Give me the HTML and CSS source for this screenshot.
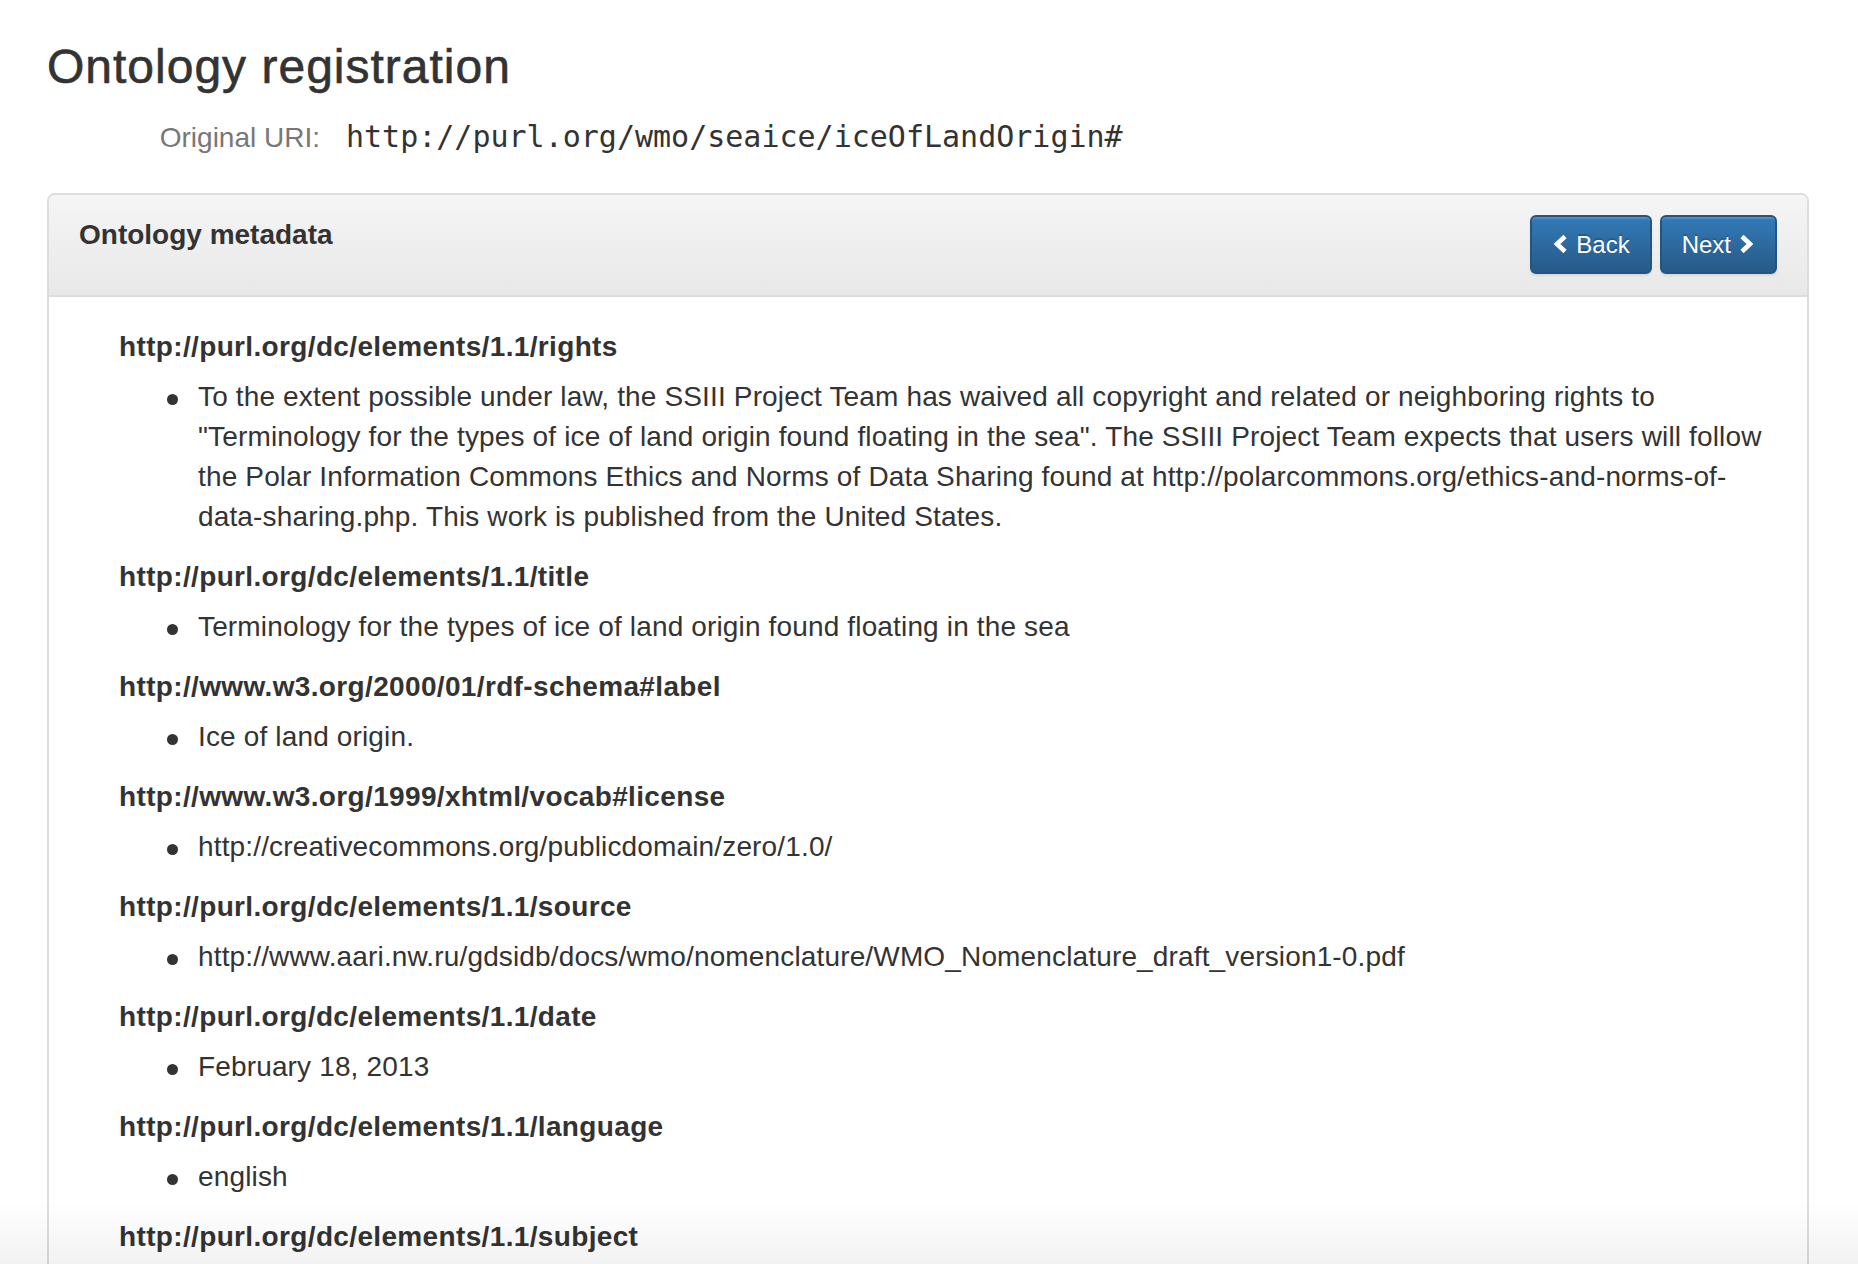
FILE: index.html
```html
<!DOCTYPE html>
<html lang="en">
<head>
<meta charset="utf-8">
<title>Ontology registration</title>
<link rel="stylesheet" href="styles.css">
</head>
<body>
<div class="page">
  <h3 class="page-title">Ontology registration</h3>
  <div class="uri-row">
    <span class="uri-label">Original URI:</span><span class="uri-value">http://purl.org/wmo/seaice/iceOfLandOrigin#</span>
  </div>

  <div class="panel">
    <div class="panel-heading">
      <h4 class="panel-title">Ontology metadata</h4>
      <div class="btn-group">
        <button class="btn"><svg class="chev" width="16" height="20" viewBox="0 0 16 20"><polyline points="13,2.5 5,10 13,17.5" fill="none" stroke="#fff" stroke-width="4.6" stroke-linejoin="miter"/></svg>Back</button>
        <button class="btn">Next<svg class="chev chev-right" width="16" height="20" viewBox="0 0 16 20"><polyline points="3,2.5 11,10 3,17.5" fill="none" stroke="#fff" stroke-width="4.6" stroke-linejoin="miter"/></svg></button>
      </div>
    </div>
    <div class="panel-body">
      <dl class="props">
        <dt>http://purl.org/dc/elements/1.1/rights</dt>
        <dd><ul><li>To the extent possible under law, the SSIII Project Team has waived all copyright and related or neighboring rights to "Terminology for the types of ice of land origin found floating in the sea". The SSIII Project Team expects that users will follow the Polar Information Commons Ethics and Norms of Data Sharing found at http://polarcommons.org/ethics-and-norms-of-data-sharing.php. This work is published from the United States.</li></ul></dd>

        <dt>http://purl.org/dc/elements/1.1/title</dt>
        <dd><ul><li>Terminology for the types of ice of land origin found floating in the sea</li></ul></dd>

        <dt>http://www.w3.org/2000/01/rdf-schema#label</dt>
        <dd><ul><li>Ice of land origin.</li></ul></dd>

        <dt>http://www.w3.org/1999/xhtml/vocab#license</dt>
        <dd><ul><li>http://creativecommons.org/publicdomain/zero/1.0/</li></ul></dd>

        <dt>http://purl.org/dc/elements/1.1/source</dt>
        <dd><ul><li>http://www.aari.nw.ru/gdsidb/docs/wmo/nomenclature/WMO_Nomenclature_draft_version1-0.pdf</li></ul></dd>

        <dt>http://purl.org/dc/elements/1.1/date</dt>
        <dd><ul><li>February 18, 2013</li></ul></dd>

        <dt>http://purl.org/dc/elements/1.1/language</dt>
        <dd><ul><li>english</li></ul></dd>

        <dt>http://purl.org/dc/elements/1.1/subject</dt>
      </dl>
    </div>
  </div>
</div>
<div class="bottom-fade"></div>
</body>
</html>
```

FILE: styles.css
```css
html, body {
  margin: 0;
  padding: 0;
  background: #fff;
}

body {
  font-family: "Liberation Sans", Helvetica, Arial, sans-serif;
  font-size: 28px;
  line-height: 40px;
  color: #333;
}

.page {
  padding: 41px 49px 0 47px;
}

.page-title {
  margin: 0;
  font-size: 48px;
  line-height: 1.1;
  font-weight: normal;
  letter-spacing: 1px;
  -webkit-text-stroke: 0.6px #333;
  color: #333;
}

.uri-row {
  margin-top: 23px;
  line-height: 40px;
}

.uri-label {
  display: inline-block;
  width: 273px;
  text-align: right;
  color: #777;
}

.uri-value {
  margin-left: 26px;
  font-family: "DejaVu Sans Mono", "Liberation Mono", monospace;
  font-size: 30px;
  color: #333;
}

.panel {
  margin-top: 35px;
  border: 2px solid #ddd;
  border-radius: 8px;
  background: #fff;
}

.panel-heading {
  display: flex;
  justify-content: space-between;
  align-items: flex-start;
  padding: 20px 30px 21px 30px;
  border-bottom: 2px solid #ddd;
  border-radius: 6px 6px 0 0;
  background: linear-gradient(to bottom, #f5f5f5 0%, #e8e8e8 100%);
}

.panel-title {
  margin: 0;
  font-size: 28px;
  line-height: 40px;
  font-weight: bold;
  color: #333;
}

.btn-group {
  display: flex;
  gap: 8px;
}

.btn {
  display: inline-flex;
  align-items: center;
  margin: 0;
  padding: 10px 20px;
  font-family: "Liberation Sans", Helvetica, Arial, sans-serif;
  font-size: 24px;
  line-height: 35px;
  color: #fff;
  text-shadow: 0 -2px 0 rgba(0, 0, 0, 0.2);
  border: 2px solid #245580;
  border-radius: 6px;
  background: linear-gradient(to bottom, #337ab7 0%, #265a88 100%);
  box-shadow: inset 0 2px 0 rgba(255, 255, 255, 0.15), 0 2px 2px rgba(0, 0, 0, 0.075);
  cursor: pointer;
}

.chev {
  display: block;
  flex: none;
  margin-right: 8px;
}

.chev-right {
  margin-right: 0;
  margin-left: 8px;
}

.panel-body {
  padding: 30px 30px 30px 30px;
}

.props {
  margin: 0;
  padding-left: 40px;
}

.props dt {
  font-weight: bold;
  letter-spacing: 0.35px;
  margin: 0 0 10px 0;
}

.props dd {
  margin: 0;
}

.props ul {
  margin: 0 0 20px 0;
  padding-left: 79px;
  list-style: none;
}

.props li {
  position: relative;
  letter-spacing: 0.15px;
}

.props li::before {
  content: "";
  position: absolute;
  left: -31px;
  top: 17px;
  width: 11px;
  height: 11px;
  border-radius: 50%;
  background: #333;
}

.bottom-fade {
  position: fixed;
  left: 0;
  right: 0;
  bottom: 0;
  height: 62px;
  background: linear-gradient(to bottom, rgba(0, 0, 0, 0) 0%, rgba(0, 0, 0, 0.05) 100%);
  pointer-events: none;
}
```
